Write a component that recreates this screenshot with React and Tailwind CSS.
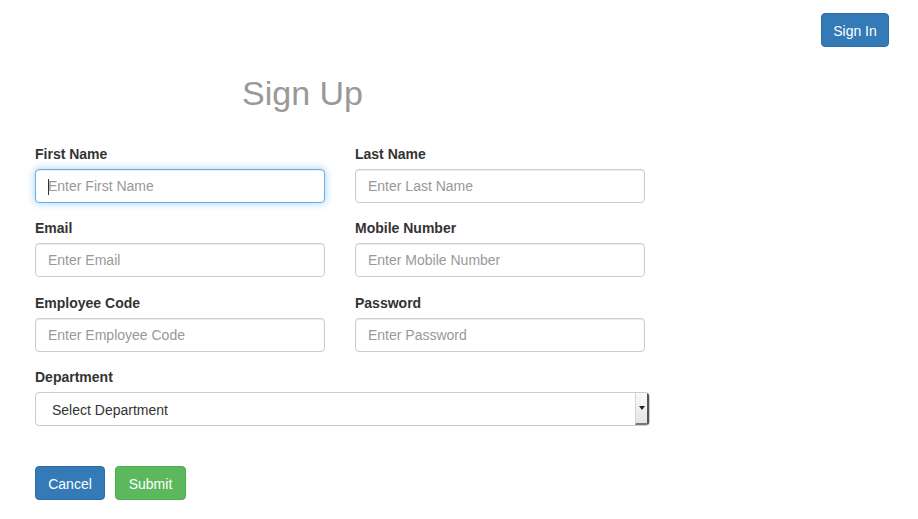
import React from "react";

const font = { fontFamily: '"Liberation Sans", Arial, sans-serif' };

function Field({ label, placeholder, focused }) {
  return (
    <div className="flex flex-col mb-[15.34px]">
      <label className="text-[14px] leading-[20px] font-bold text-[#333] mb-[5px]">{label}</label>
      <div
        className={
          "relative h-[34px] rounded-[4px] border bg-white flex items-center px-[12px] pt-[1px] " +
          (focused
            ? "border-[#66afe9] shadow-[inset_0_1px_1px_rgba(0,0,0,0.075),0_0_8px_rgba(102,175,233,0.6)]"
            : "border-[#ccc] shadow-[inset_0_1px_1px_rgba(0,0,0,0.075)]")
        }
      >
        {focused && <span className="absolute left-[12px] top-[9px] w-[1px] h-[16px] bg-[#333]" />}
        <span className="text-[14px] text-[#999]">{placeholder}</span>
      </div>
    </div>
  );
}

export default function App() {
  return (
    <div className="w-[918px] h-[519px] bg-white text-[#333]" style={font}>
      <div className="flex justify-end pt-[13px] pr-[29px]">
        <button className="h-[34px] w-[68px] pt-[3px] rounded-[4px] border border-[#2e6da4] bg-[#337ab7] text-white text-[14px]">
          Sign In
        </button>
      </div>
      <div className="pl-[35px]">
        <h1 className="mt-[26px] pl-[207px] text-[34px] leading-[40px] font-normal text-[#999]">Sign Up</h1>
        <div className="mt-[31px] w-[615px]">
          <div className="grid grid-cols-[290px_290px] gap-x-[30px]">
            <Field label="First Name" placeholder="Enter First Name" focused />
            <Field label="Last Name" placeholder="Enter Last Name" />
            <Field label="Email" placeholder="Enter Email" />
            <Field label="Mobile Number" placeholder="Enter Mobile Number" />
            <Field label="Employee Code" placeholder="Enter Employee Code" />
            <Field label="Password" placeholder="Enter Password" />
          </div>
          <div className="flex flex-col">
            <label className="text-[14px] leading-[20px] font-bold text-[#333] mb-[5px]">Department</label>
            <div className="h-[34px] rounded-[4px] border border-[#ccc] bg-white flex items-center justify-between pl-[16px] overflow-hidden">
              <span className="text-[14px] text-[#333] pt-[3px]">Select Department</span>
              <div className="h-full w-[14px] bg-gradient-to-b from-[#fafafa] to-[#e5e5e5] border-l border-[#d5d5d5] border-r-2 border-r-[#555] border-b-2 border-b-[#777] flex items-center justify-center">
                <svg width="6" height="4" viewBox="0 0 6 4"><path d="M0 0h6L3 4z" fill="#222" /></svg>
              </div>
            </div>
          </div>
          <div className="flex gap-[10px] mt-[40px]">
            <button className="h-[34px] w-[70px] pt-[3px] rounded-[4px] border border-[#2e6da4] bg-[#337ab7] text-white text-[14px]">
              Cancel
            </button>
            <button className="h-[34px] w-[71px] pt-[3px] rounded-[4px] border border-[#4cae4c] bg-[#5cb85c] text-white text-[14px]">
              Submit
            </button>
          </div>
        </div>
      </div>
    </div>
  );
}
